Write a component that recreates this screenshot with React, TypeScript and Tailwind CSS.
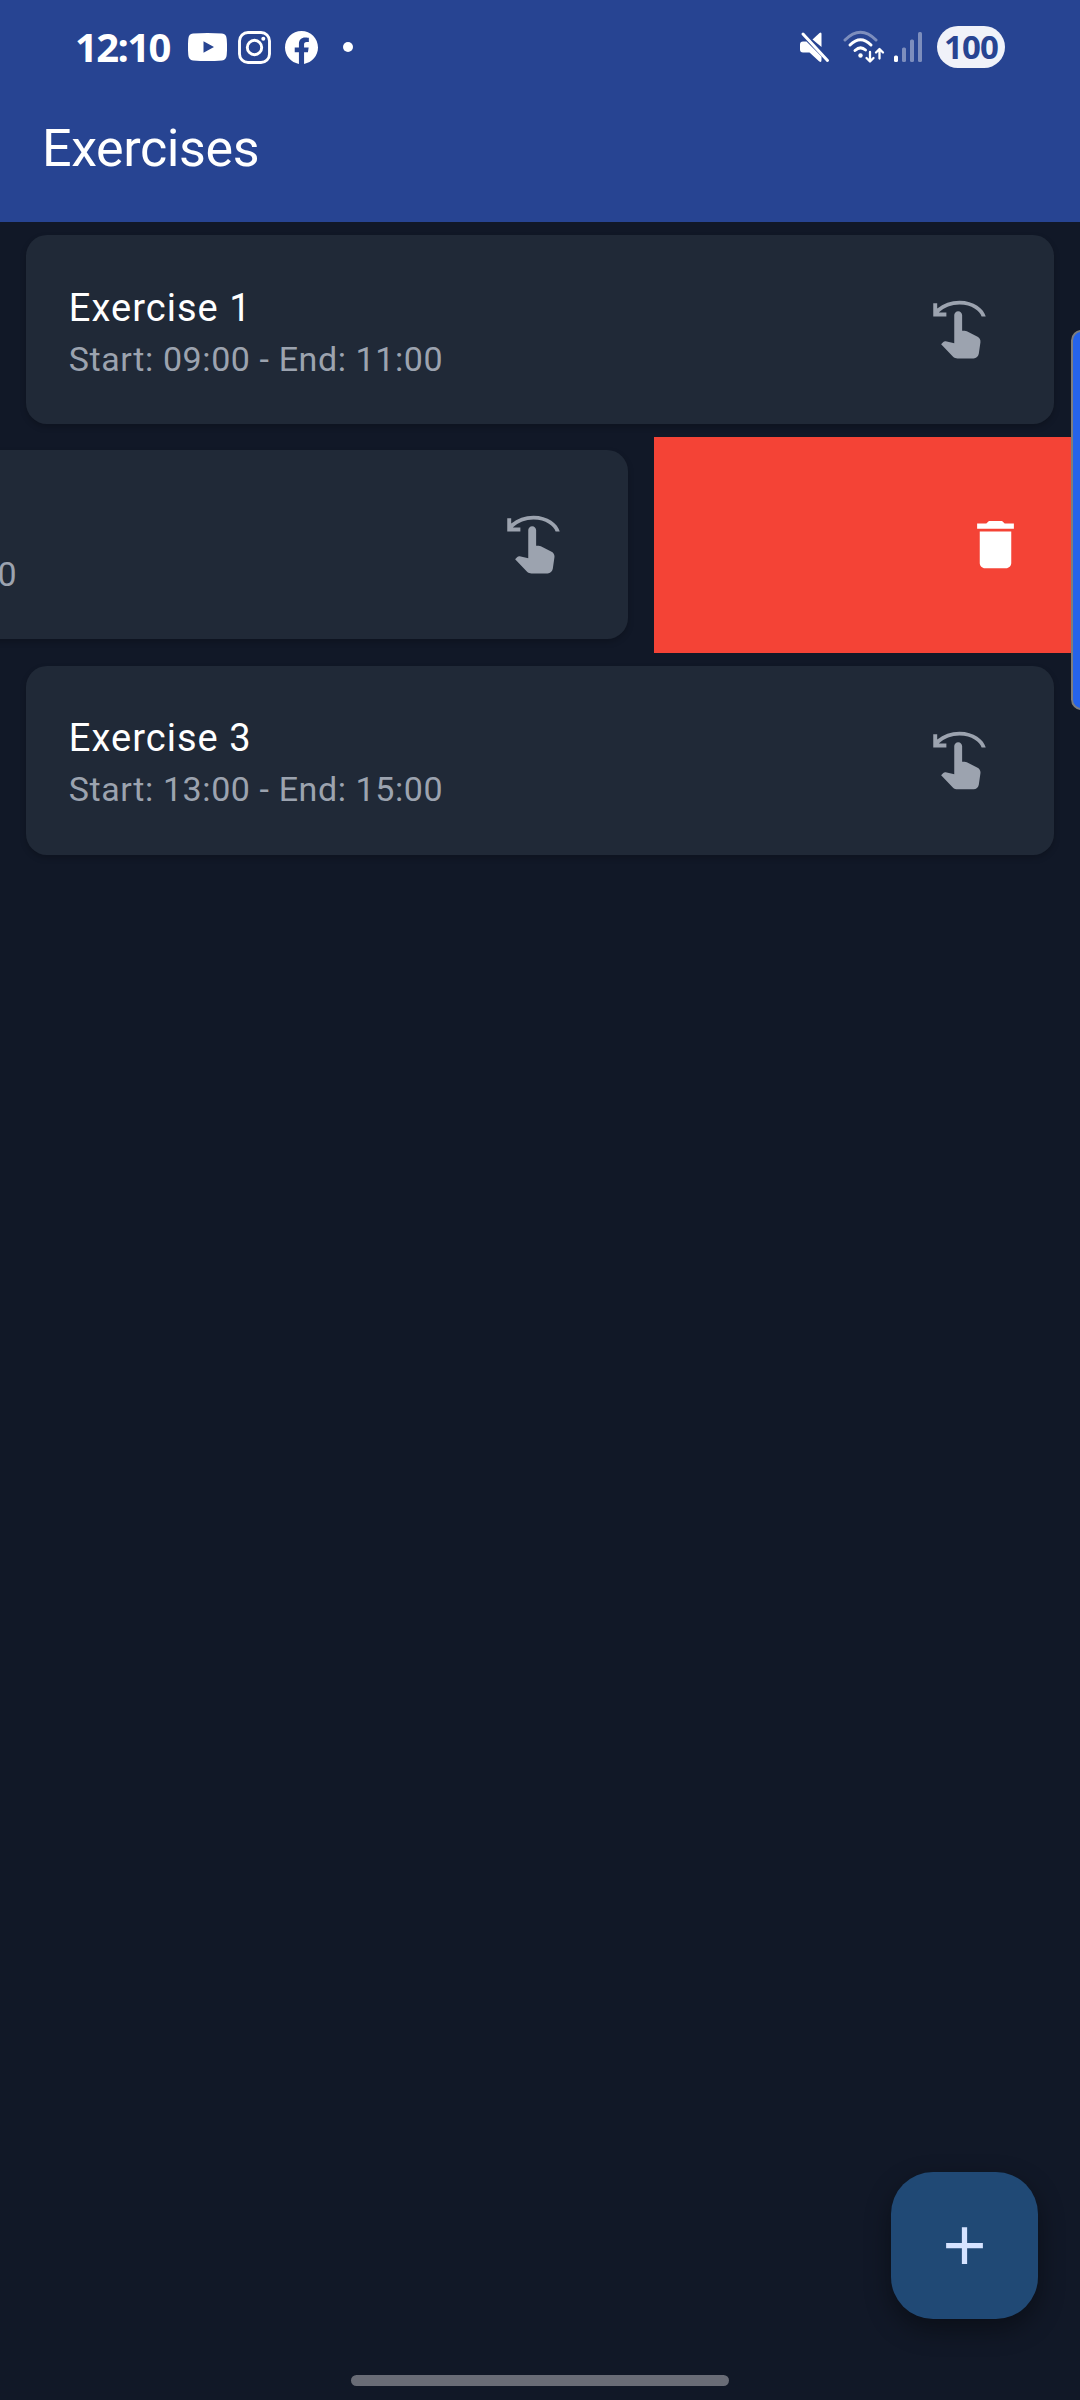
import type { ReactNode } from "react";
import { MdAdd, MdDelete, MdSwipeLeft } from "react-icons/md";

function StatusBar() {
  return (
    <div className="flex h-[94px] items-center pl-[75px] pr-[75px] text-white">
      <span className="w-[113px] font-['Open_Sans'] text-[40px] leading-none font-bold tracking-[-1.6px]">
        12:10
      </span>
      <svg className="h-[28px] w-[39px]" viewBox="0 0 39 28" fill="currentColor">
        <path fillRule="evenodd" d="M5 .6Q19.500-.6 34 .6Q38.400 1 38.700 6Q39.400 14 38.700 22Q38.400 27 34 27.400Q19.500 28.600 5 27.400Q.6 27 .3 22Q-.4 14 .3 6Q.6 1 5 .6ZM15.500 8.300V19.700L26 14Z" />
      </svg>
      <svg className="ml-[11px] h-[33px] w-[33px]" viewBox="0 0 33 33" fill="none" stroke="currentColor" strokeWidth="2.900">
        <rect x="1.500" y="1.500" width="30" height="30" rx="8.500" />
        <circle cx="16.500" cy="16.500" r="7.200" />
        <circle cx="25.300" cy="7.700" r="2" fill="currentColor" stroke="none" />
      </svg>
      <svg className="ml-[14px] h-[33px] w-[33px]" viewBox="0 0 24 24" fill="currentColor">
        <path d="M24 12.073c0-6.627-5.373-12-12-12s-12 5.373-12 12c0 5.990 4.388 10.954 10.125 11.854v-8.385H7.078v-3.470h3.047V9.430c0-3.007 1.792-4.669 4.533-4.669 1.312 0 2.686.235 2.686.235v2.953H15.830c-1.491 0-1.956.925-1.956 1.874v2.250h3.328l-.532 3.470h-2.796v8.385C19.612 23.027 24 18.062 24 12.073z" />
      </svg>
      <span className="ml-[25px] h-[10px] w-[10px] rounded-full bg-white" />
      <svg className="ml-auto h-[32px] w-[30px]" viewBox="0 0 30 32" fill="currentColor">
        <path d="M12.500 8.500L19.500 2Q21.500.5 21.500 3V16Z" />
        <path d="M3 10.500H6.500L21.500 25.500V29Q21.500 32 19 30.200L9.500 21.500H3Q0 21.500 0 18.500V13.500Q0 10.500 3 10.500Z" />
        <path d="M3 3L27.500 29.500" stroke="currentColor" strokeWidth="3" strokeLinecap="round" />
      </svg>
      <svg className="ml-[13px] h-[34px] w-[42px]" viewBox="0 0 42 34" fill="none" stroke="currentColor" strokeWidth="3" strokeLinecap="round" strokeLinejoin="round">
        <path d="M2 10Q17.500-5.500 33 10" opacity=".4" />
        <path d="M7 15Q17.500 4.500 28 15" />
        <path d="M12 20.500Q17.500 15.500 22.500 20" />
        <circle cx="17.500" cy="25.500" r="2.200" fill="currentColor" stroke="none" />
        <path d="M27 22V31M23.500 28L27 31.500L30.500 28M36.500 28.500V19.500M33 22.500L36.500 19L40 22.500" strokeWidth="2.300" />
      </svg>
      <svg className="ml-[9px] h-[30px] w-[28px]" viewBox="0 0 28 30" fill="currentColor">
        <rect x="0" y="23.500" width="4" height="6.500" rx="1.500" />
        <rect x="8" y="15.500" width="4" height="14.500" rx="1.500" opacity=".4" />
        <rect x="16" y="7.500" width="4" height="22.500" rx="1.500" opacity=".4" />
        <rect x="24" y="0" width="4" height="30" rx="1.500" opacity=".4" />
      </svg>
      <span className="ml-[15px] flex h-[42px] w-[68px] items-center justify-center rounded-full bg-[#f0f2f9] pb-[2px] font-['Open_Sans'] text-[33px] leading-none font-bold tracking-[-0.8px] text-[#274492]">
        100
      </span>
    </div>
  );
}

function ExerciseCard({ name, start, end }: { name: string; start: string; end: string }) {
  return (
    <div className="h-[215.250px] w-[1080px] shrink-0 px-[26.250px] py-[13.125px]">
      <div className="flex h-[189px] items-center justify-between rounded-[21px] bg-[#202937] pr-[63px] pl-[42.500px] shadow-[0_3px_6px_rgba(0,0,0,0.2)]">
        <div className="pt-[3px]">
          <div className="text-[38px] leading-[56px] tracking-[1.050px] text-white">{name}</div>
          <div className="text-[34px] leading-[47px] tracking-[0.600px] text-[#9ca3af]">
            Start: {start} - End: {end}
          </div>
        </div>
        <MdSwipeLeft className="h-[63px] w-[63px] text-[#9ca3af]" />
      </div>
    </div>
  );
}

function DismissedRow({ children }: { children: ReactNode }) {
  return (
    <div className="flex overflow-hidden">
      <div className="-ml-[426px] shrink-0">{children}</div>
      <div className="flex flex-1 items-center justify-end bg-[#f44336] pr-[52.600px]">
        <MdDelete className="h-[63px] w-[63px] text-white" />
      </div>
    </div>
  );
}

export default function App() {
  return (
    <div className="relative flex h-[2400px] w-[1080px] flex-col overflow-hidden bg-[#111827] font-[Roboto,sans-serif]">
      <header className="h-[222px] shrink-0 bg-[#274492]">
        <StatusBar />
        <h1 className="pl-[42px] text-[52px] leading-[110px] tracking-[-0.400px] text-white">Exercises</h1>
      </header>
      <main className="flex-1">
        <ExerciseCard name="Exercise 1" start="09:00" end="11:00" />
        <DismissedRow>
          <ExerciseCard name="Exercise 2" start="11:00" end="13:00" />
        </DismissedRow>
        <ExerciseCard name="Exercise 3" start="13:00" end="15:00" />
      </main>
      <div className="flex justify-end pr-[42px] pb-[56px]">
        <button className="flex h-[147px] w-[147px] items-center justify-center rounded-[42px] bg-[#204975] shadow-[0_10px_26px_rgba(0,0,0,0.4)]">
          <MdAdd className="h-[63px] w-[63px] text-[#d6e3ff]" />
        </button>
      </div>
      <div className="mb-[14px] h-[11px] w-[378px] self-center rounded-full bg-[#696c76]" />
      <div className="absolute top-[330px] -right-[12px] h-[380px] w-[21px] rounded-[12px] border-2 border-[#7d7d7d] bg-[#2563eb]" />
    </div>
  );
}
